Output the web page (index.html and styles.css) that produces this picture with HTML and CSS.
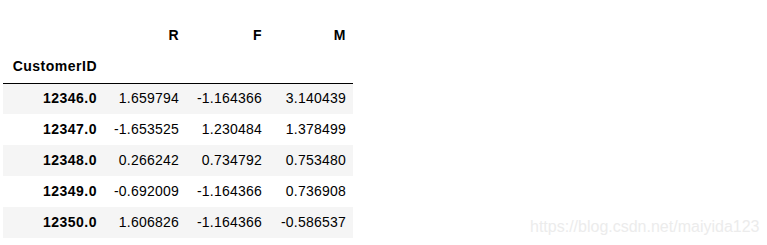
FILE: index.html
```html
<!DOCTYPE html>
<html>
<head>
<meta charset="utf-8">
<link rel="stylesheet" href="styles.css">
</head>
<body>
<div class="page">
  <table class="dataframe">
    <thead>
      <tr>
        <th class="idx"></th>
        <th class="c1">R</th>
        <th class="c2">F</th>
        <th class="c3">M</th>
      </tr>
      <tr class="names">
        <th class="idx">CustomerID</th>
        <th></th>
        <th></th>
        <th></th>
      </tr>
    </thead>
    <tbody>
      <tr><th>12346.0</th><td>1.659794</td><td>-1.164366</td><td>3.140439</td></tr>
      <tr><th>12347.0</th><td>-1.653525</td><td>1.230484</td><td>1.378499</td></tr>
      <tr><th>12348.0</th><td>0.266242</td><td>0.734792</td><td>0.753480</td></tr>
      <tr><th>12349.0</th><td>-0.692009</td><td>-1.164366</td><td>0.736908</td></tr>
      <tr><th>12350.0</th><td>1.606826</td><td>-1.164366</td><td>-0.586537</td></tr>
    </tbody>
  </table>
  <div class="watermark">https://blog.csdn.net/maiyida123</div>
</div>
</body>
</html>
```
FILE: styles.css
```css
html, body {
  margin: 0;
  padding: 0;
  background: #ffffff;
}
.page {
  position: relative;
  width: 767px;
  height: 245px;
  padding: 20px 0 0 3px;
  box-sizing: border-box;
  font-family: "Liberation Sans", Arial, sans-serif;
  font-size: 14px;
  color: #000000;
}
.dataframe {
  border-collapse: collapse;
  border-spacing: 0;
  table-layout: fixed;
  width: 350px;
}
.dataframe th,
.dataframe td {
  height: 31px;
  padding: 0 7px;
  box-sizing: border-box;
  text-align: right;
  vertical-align: middle;
  white-space: nowrap;
  letter-spacing: 0.22px;
  line-height: 17px;
}
.dataframe th {
  font-weight: bold;
  letter-spacing: 0.5px;
}
.dataframe .idx {
  width: 101px;
}
.dataframe .c1 { width: 82px; }
.dataframe .c2 { width: 83px; }
.dataframe .c3 { width: 84px; }
.dataframe thead tr.names th {
  border-bottom: 1px solid #000000;
  height: 32px;
}
.dataframe tbody tr:nth-child(odd) {
  background: #f5f5f5;
}
.watermark {
  position: absolute;
  left: 530px;
  top: 218px;
  font-family: "Liberation Sans", Arial, sans-serif;
  font-size: 16px;
  color: #ececec;
  white-space: nowrap;
}
```
